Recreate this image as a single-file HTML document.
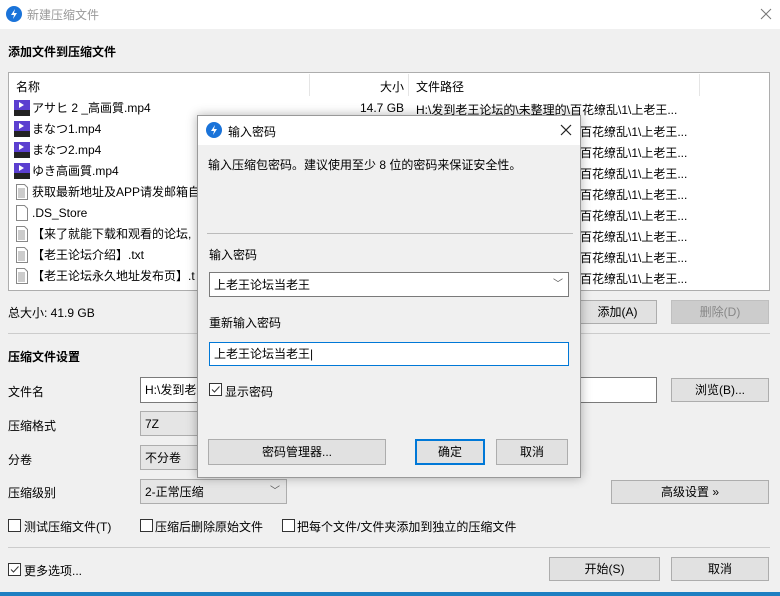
<!DOCTYPE html><html><head><meta charset="utf-8"><style>
*{box-sizing:border-box;margin:0;padding:0}
body{width:780px;height:596px;overflow:hidden;background:#f0f0f0;font-family:"Liberation Sans","Noto Sans CJK SC",sans-serif;font-size:12px;color:#000;position:relative}
.a{position:absolute;white-space:nowrap}
.btn{position:absolute;background:#e1e1e1;border:1px solid #adadad;text-align:center;line-height:22px}
.inp{position:absolute;background:#fff;border:1px solid #7a7a7a;padding-left:4px;line-height:24px}
.cb{position:absolute;width:13px;height:13px;border:1px solid #333;background:#fff}
.ic{position:absolute;left:14px;width:16px;height:16px}
.row{position:absolute;left:32px;height:21px;line-height:21px}
.rp{position:absolute;left:416px;line-height:21px}
</style></head><body>
<div class="a" style="left:0;top:0;width:780px;height:29px;background:#fff"></div>
<svg class="a" style="left:6px;top:6px" width="16" height="16"><circle cx="8" cy="8" r="8" fill="#1a73d9"/><path d="M9 3L5 9h3l-1 4 4-6H8z" fill="#fff"/></svg>
<div class="a" style="left:27px;top:6px;color:#999">新建压缩文件</div>
<svg class="a" style="left:760px;top:8px" width="12" height="12"><path d="M1 1L11 11M11 1L1 11" stroke="#777" stroke-width="1"/></svg>
<div class="a" style="left:8px;top:43px;font-weight:bold">添加文件到压缩文件</div>
<div class="a" style="left:8px;top:72px;width:762px;height:219px;background:#fff;border:1px solid #adadad"></div>
<div class="a" style="left:309px;top:74px;width:1px;height:22px;background:#e5e5e5"></div>
<div class="a" style="left:408px;top:74px;width:1px;height:22px;background:#e5e5e5"></div>
<div class="a" style="left:699px;top:74px;width:1px;height:22px;background:#e5e5e5"></div>
<div class="a" style="left:16px;top:78px">名称</div>
<div class="a" style="left:380px;top:78px">大小</div>
<div class="a" style="left:416px;top:78px">文件路径</div>
<div class="a" style="left:360px;top:101px">14.7 GB</div>
<div class="a" style="left:416px;top:101px">H:\发到老王论坛的\未整理的\百花缭乱\1\上老王...</div>
<div class="a" style="left:580px;top:122px;line-height:21px">百花缭乱\1\上老王...<br>百花缭乱\1\上老王...<br>百花缭乱\1\上老王...<br>百花缭乱\1\上老王...<br>百花缭乱\1\上老王...<br>百花缭乱\1\上老王...<br>百花缭乱\1\上老王...<br>百花缭乱\1\上老王...</div>
<svg class="ic" style="top:100px"><rect width="16" height="16" fill="#5b3fd0"/><rect y="10" width="16" height="6" fill="#222"/><path d="M5 2v6l5-3z" fill="#fff"/></svg>
<svg class="ic" style="top:121px"><rect width="16" height="16" fill="#5b3fd0"/><rect y="10" width="16" height="6" fill="#222"/><path d="M5 2v6l5-3z" fill="#fff"/></svg>
<svg class="ic" style="top:142px"><rect width="16" height="16" fill="#5b3fd0"/><rect y="10" width="16" height="6" fill="#222"/><path d="M5 2v6l5-3z" fill="#fff"/></svg>
<svg class="ic" style="top:163px"><rect width="16" height="16" fill="#5b3fd0"/><rect y="10" width="16" height="6" fill="#222"/><path d="M5 2v6l5-3z" fill="#fff"/></svg>
<svg class="ic" style="top:184px"><path d="M2.5 .5h8l3 3v12h-11z" fill="#fff" stroke="#888"/><path d="M4 5h7M4 7h7M4 9h7M4 11h7M4 13h7" stroke="#999"/></svg>
<svg class="ic" style="top:205px"><path d="M2.5 .5h8l3 3v12h-11z" fill="#fff" stroke="#888"/></svg>
<svg class="ic" style="top:226px"><path d="M2.5 .5h8l3 3v12h-11z" fill="#fff" stroke="#888"/><path d="M4 5h7M4 7h7M4 9h7M4 11h7M4 13h7" stroke="#999"/></svg>
<svg class="ic" style="top:247px"><path d="M2.5 .5h8l3 3v12h-11z" fill="#fff" stroke="#888"/><path d="M4 5h7M4 7h7M4 9h7M4 11h7M4 13h7" stroke="#999"/></svg>
<svg class="ic" style="top:268px"><path d="M2.5 .5h8l3 3v12h-11z" fill="#fff" stroke="#888"/><path d="M4 5h7M4 7h7M4 9h7M4 11h7M4 13h7" stroke="#999"/></svg>
<div class="row" style="top:98px">アサヒ 2 _高画質.mp4</div>
<div class="row" style="top:119px">まなつ1.mp4</div>
<div class="row" style="top:140px">まなつ2.mp4</div>
<div class="row" style="top:161px">ゆき高画質.mp4</div>
<div class="row" style="top:182px">获取最新地址及APP请发邮箱自</div>
<div class="row" style="top:203px">.DS_Store</div>
<div class="row" style="top:224px">【来了就能下载和观看的论坛,</div>
<div class="row" style="top:245px">【老王论坛介绍】.txt</div>
<div class="row" style="top:266px">【老王论坛永久地址发布页】.t</div>
<div class="a" style="left:8px;top:304px">总大小: 41.9 GB</div>
<div class="btn" style="left:578px;top:300px;width:79px;height:24px">添加(A)</div>
<div class="btn" style="left:671px;top:300px;width:98px;height:24px;background:#ccc;border-color:#bfbfbf;color:#888">删除(D)</div>
<div class="a" style="left:8px;top:333px;width:762px;height:1px;background:#ccc"></div>
<div class="a" style="left:8px;top:348px;font-weight:bold">压缩文件设置</div>
<div class="a" style="left:8px;top:383px">文件名</div>
<div class="inp" style="left:140px;top:377px;width:517px;height:26px">H:\发到老</div>
<div class="btn" style="left:671px;top:378px;width:98px;height:24px">浏览(B)...</div>
<div class="a" style="left:8px;top:417px">压缩格式</div>
<div class="inp" style="left:140px;top:411px;width:100px;height:25px;background:#e5e5e5;border-color:#adadad">7Z</div>
<div class="a" style="left:8px;top:451px">分卷</div>
<div class="inp" style="left:140px;top:445px;width:100px;height:25px;background:#e5e5e5;border-color:#adadad">不分卷</div>
<div class="a" style="left:8px;top:484px">压缩级别</div>
<div class="inp" style="left:140px;top:479px;width:147px;height:25px;background:#e5e5e5;border-color:#adadad">2-正常压缩<span style="position:absolute;right:6px;color:#555;font-size:10px">﹀</span></div>
<div class="btn" style="left:611px;top:480px;width:158px;height:24px">高级设置 »</div>
<div class="cb" style="left:8px;top:519px"></div><div class="a" style="left:24px;top:518px">测试压缩文件(T)</div>
<div class="cb" style="left:140px;top:519px"></div><div class="a" style="left:155px;top:518px">压缩后删除原始文件</div>
<div class="cb" style="left:282px;top:519px"></div><div class="a" style="left:297px;top:518px">把每个文件/文件夹添加到独立的压缩文件</div>
<div class="a" style="left:8px;top:547px;width:762px;height:1px;background:#ccc"></div>
<svg class="a" style="left:8px;top:563px" width="13" height="13"><rect x=".5" y=".5" width="12" height="12" fill="#fff" stroke="#333"/><path d="M3 6.5l2.5 2.5 5-5.5" stroke="#333" fill="none"/></svg>
<div class="a" style="left:24px;top:562px">更多选项...</div>
<div class="btn" style="left:549px;top:557px;width:111px;height:24px">开始(S)</div>
<div class="btn" style="left:671px;top:557px;width:98px;height:24px">取消</div>
<div class="a" style="left:0;top:592px;width:780px;height:4px;background:#1e7fc2"></div>

<div class="a" style="left:197px;top:115px;width:384px;height:363px;background:#f0f0f0;border:1px solid #999;box-shadow:0 0 10px rgba(0,0,0,.3)"></div>
<div class="a" style="left:198px;top:116px;width:382px;height:29px;background:#fff"></div>
<svg class="a" style="left:206px;top:122px" width="16" height="16"><circle cx="8" cy="8" r="8" fill="#1a73d9"/><path d="M9 3L5 9h3l-1 4 4-6H8z" fill="#fff"/></svg>
<div class="a" style="left:228px;top:123px">输入密码</div>
<svg class="a" style="left:560px;top:124px" width="12" height="12"><path d="M1 1L11 11M11 1L1 11" stroke="#222" stroke-width="1.2"/></svg>
<div class="a" style="left:208px;top:156px">输入压缩包密码。建议使用至少 8 位的密码来保证安全性。</div>
<div class="a" style="left:207px;top:233px;width:366px;height:1px;background:#bbb"></div>
<div class="a" style="left:209px;top:246px">输入密码</div>
<div class="inp" style="left:209px;top:272px;width:360px;height:25px">上老王论坛当老王<span style="position:absolute;right:5px;color:#555;font-size:10px">﹀</span></div>
<div class="a" style="left:209px;top:314px">重新输入密码</div>
<div class="inp" style="left:209px;top:342px;width:360px;height:24px;border-color:#0078d7;line-height:22px">上老王论坛当老王|</div>
<svg class="a" style="left:209px;top:383px" width="13" height="13"><rect x=".5" y=".5" width="12" height="12" fill="#fff" stroke="#333"/><path d="M3 6.5l2.5 2.5 5-5.5" stroke="#333" fill="none"/></svg>
<div class="a" style="left:225px;top:383px">显示密码</div>
<div class="btn" style="left:208px;top:439px;width:178px;height:26px;line-height:24px">密码管理器...</div>
<div class="btn" style="left:415px;top:439px;width:70px;height:26px;line-height:22px;border:2px solid #0078d7">确定</div>
<div class="btn" style="left:496px;top:439px;width:72px;height:26px;line-height:24px">取消</div>
</body></html>
